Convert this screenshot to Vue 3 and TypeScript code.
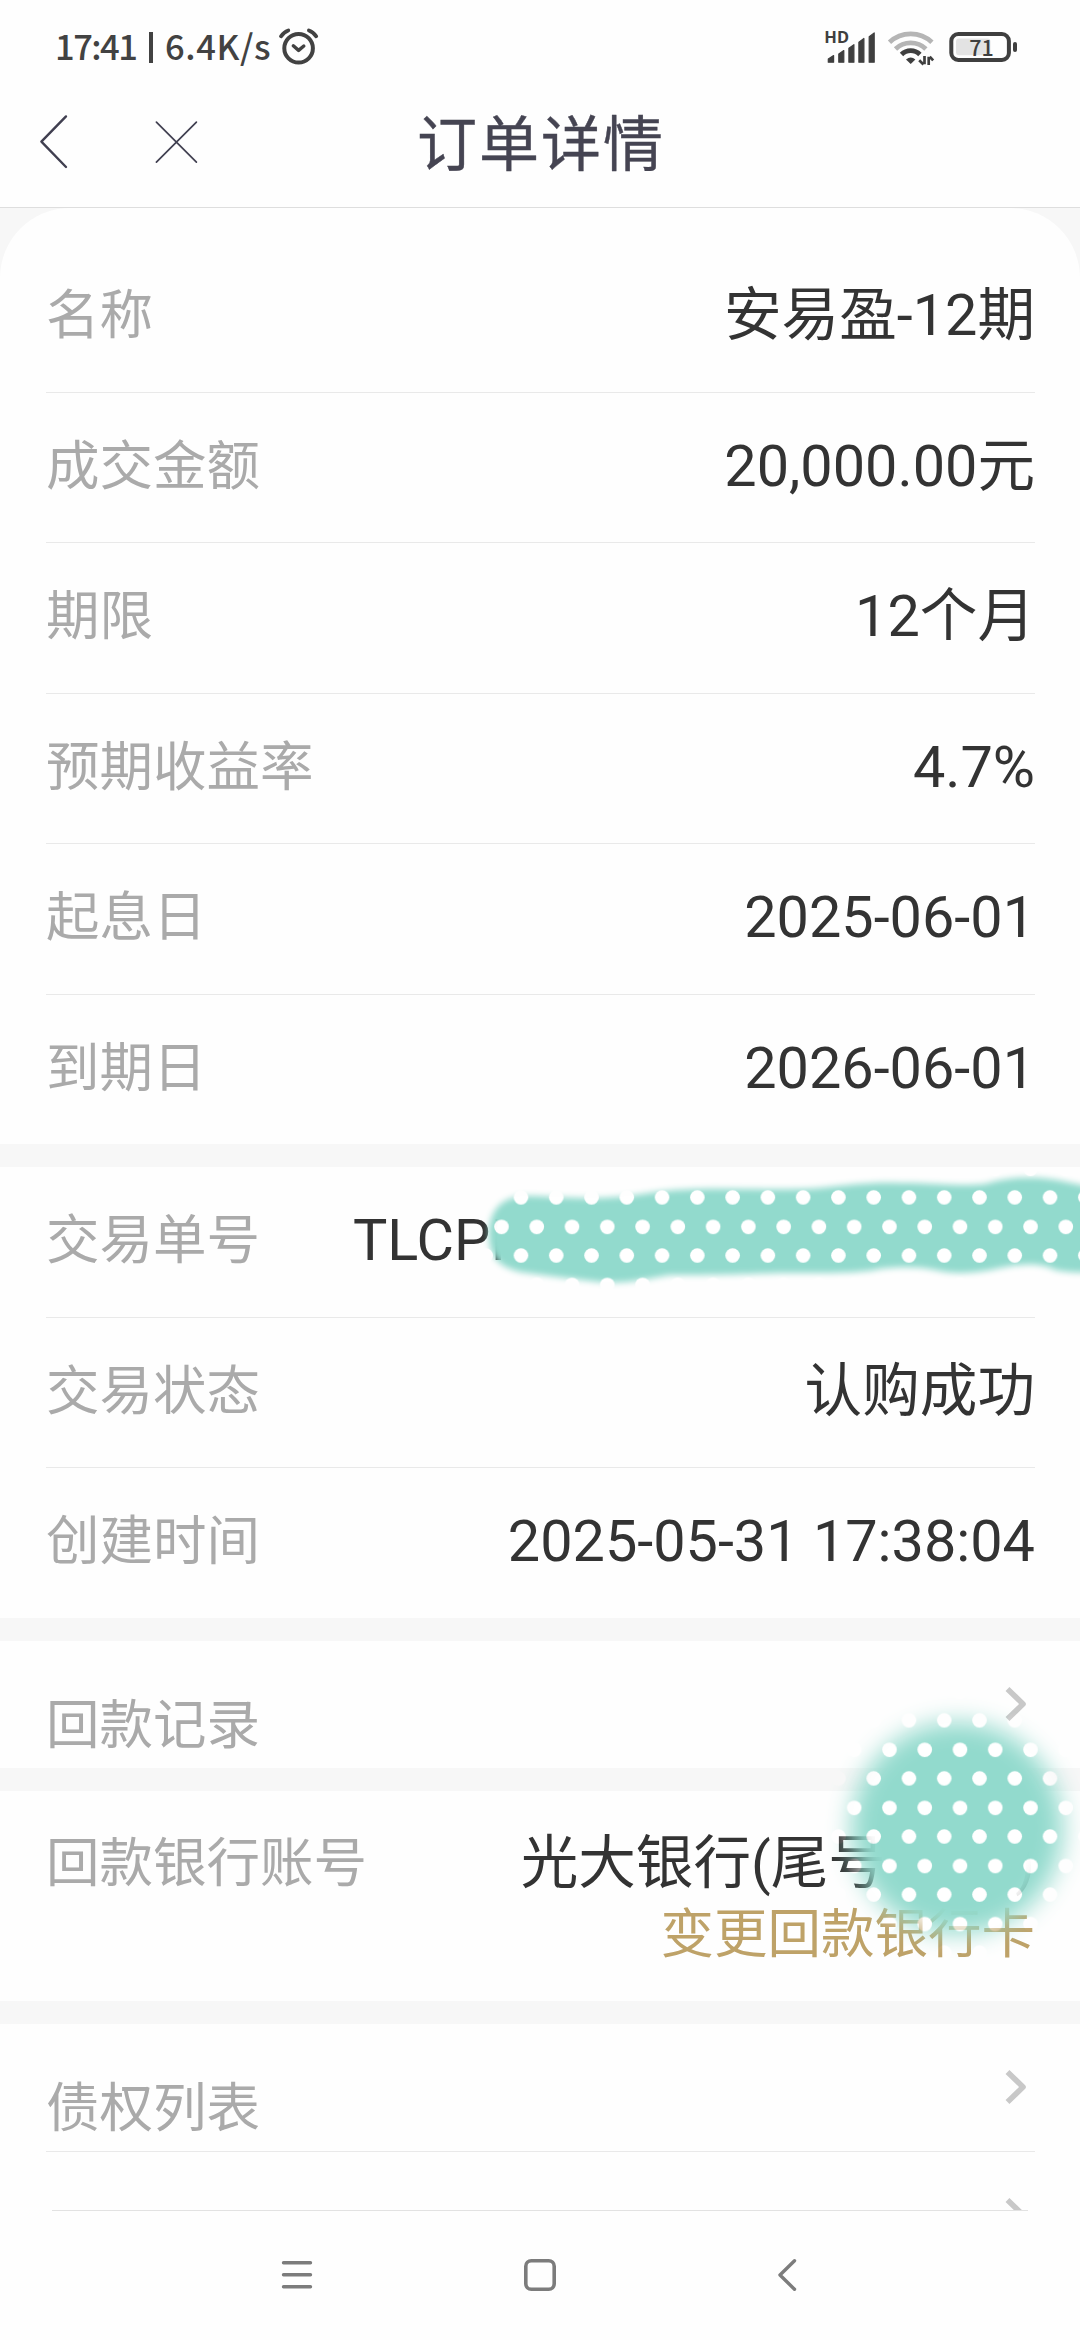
<script setup lang="ts">
interface Row {
  label: string
  value: string
}

const productRows: Row[] = [
  { label: '名称', value: '安易盈-12期' },
  { label: '成交金额', value: '20,000.00元' },
  { label: '期限', value: '12个月' },
  { label: '预期收益率', value: '4.7%' },
  { label: '起息日', value: '2025-06-01' },
  { label: '到期日', value: '2026-06-01' },
]

const tradeRows: Row[] = [
  { label: '交易单号', value: 'TLCPI' },
  { label: '交易状态', value: '认购成功' },
  { label: '创建时间', value: '2025-05-31 17:38:04' },
]
</script>

<template>
  <div class="screen">
    <div class="status">
      <div class="status-left">
        <span class="clock">17:41</span>
        <span class="bar"></span>
        <span class="rate">6.4K/s</span>
        <svg class="alarm" width="42" height="40" viewBox="278 27 42 40" fill="none" stroke="#424242" stroke-linecap="round">
          <circle cx="298.6" cy="48.3" r="14.3" stroke-width="4" />
          <path d="M293.3 45.8l5.3 4.6 5.2-4.4" stroke-width="3.4" stroke-linejoin="round" />
          <path d="M281 36.3q3-4.3 7.3-5.8M316.2 36.3q-3-4.3-7.3-5.8" stroke-width="3.8" />
        </svg>
      </div>
      <svg class="indicators" width="200" height="50" viewBox="820 22 200 50">
        <text x="824.3" y="42.7" class="hd">HD</text>
        <g fill="#3f3f3f" stroke="#3f3f3f" stroke-width="1.2" stroke-linejoin="round">
          <path d="M828.3 59l5.3-3.4v6.6h-5.3z" />
          <path d="M838.8 54l5-3.4v11.6h-5z" />
          <path d="M848.9 48.3l5-3.6v17.5h-5z" />
          <path d="M858.9 42.3l5-3.8v23.7h-5z" />
          <path d="M869.2 36.8l5-3.9v29.3h-5z" />
        </g>
        <g fill="none" stroke-width="4.8">
          <path d="M889.5 42.3a31 31 0 0 1 42.4 0" stroke="#b5b5b5" />
          <path d="M895.5 48.9a22 22 0 0 1 30.4 0" stroke="#b5b5b5" />
          <path d="M901.5 54.5a13 13 0 0 1 18.4 0" stroke="#3f3f3f" />
        </g>
        <path d="M906 59.6q4.7-4.2 9.4 0l-4.7 4.4z" fill="#3f3f3f" />
        <path d="M924.5 56v8.3M923.5 64.5l-4.3-4.3M928.7 65v-8.3M929.7 56.7l3.5 3.7" fill="none" stroke="#3f3f3f" stroke-width="2.7" />
        <rect x="951.3" y="34" width="57.6" height="26" rx="7" fill="none" stroke="#3f3f3f" stroke-width="4" />
        <rect x="956" y="38.4" width="34.5" height="16.8" rx="3" fill="#e3e3e3" />
        <text x="969.2" y="55.7" class="battery">71</text>
        <rect x="1013" y="42" width="4" height="10" rx="2" fill="#3f3f3f" />
      </svg>
    </div>

    <header class="header">
      <svg width="240" height="80" viewBox="0 102 240 80" fill="none" stroke="#403f50" stroke-linecap="round" stroke-linejoin="round">
        <path d="M66 116.4L41.4 141.7L66 167" stroke-width="2.4" />
        <path d="M156.4 122.2l40 40M196.4 122.2l-40 40" stroke-width="1.7" />
      </svg>
      <h1 class="title">订单详情</h1>
    </header>

    <main class="content">
      <section class="card product">
        <div v-for="row in productRows" :key="row.label" class="row">
          <span class="label">{{ row.label }}</span>
          <span class="value">{{ row.value }}</span>
        </div>
      </section>

      <section class="card trade">
        <div v-for="(row, i) in tradeRows" :key="row.label" class="row">
          <span class="label">{{ row.label }}</span>
          <span class="value" :class="{ serial: i === 0 }">{{ row.value }}</span>
        </div>
      </section>

      <section class="card">
        <div class="link-row">
          <span class="label">回款记录</span>
          <svg class="chevron" width="22" height="36" viewBox="0 0 22 36"><path d="M2.5 3L18 18 2.5 33" /></svg>
        </div>
      </section>

      <section class="card bank">
        <span class="label">回款银行账号</span>
        <div class="bank-info">
          <span class="value">光大银行(尾号<i class="tail"></i>)</span>
          <span class="change">变更回款银行卡</span>
        </div>
      </section>

      <section class="card last">
        <div class="link-row">
          <span class="label">债权列表</span>
          <svg class="chevron" width="22" height="36" viewBox="0 0 22 36"><path d="M2.5 3L18 18 2.5 33" /></svg>
        </div>
        <div class="link-row next">
          <span class="label"></span>
          <svg class="chevron" width="22" height="36" viewBox="0 0 22 36"><path d="M2.5 3L18 18 2.5 33" /></svg>
        </div>
      </section>
    </main>

    <nav class="nav">
      <svg width="32" height="36" viewBox="281 2257 32 36" stroke="#7c7c7c" stroke-width="3.4" stroke-linecap="round">
        <path d="M283.5 2262.7h27M283.5 2274.7h27M283.5 2286.7h27" />
      </svg>
      <svg width="32" height="36" viewBox="524 2257 32 36" fill="none" stroke="#7c7c7c" stroke-width="3.6">
        <rect x="525.8" y="2260.7" width="28.4" height="28.6" rx="5.5" />
      </svg>
      <svg width="32" height="36" viewBox="767 2257 32 36" fill="none" stroke="#7c7c7c" stroke-width="3.4" stroke-linecap="round" stroke-linejoin="round">
        <path d="M794.5 2260.7L780 2275l14.5 14.3" />
      </svg>
    </nav>

    <!-- polka-dot brush strokes that cover the private numbers -->
    <svg class="brush" width="1080" height="2340" viewBox="0 0 1080 2340">
      <defs>
        <pattern id="dots" patternUnits="userSpaceOnUse" x="494" y="1183" width="35.27" height="58.1">
          <rect width="36" height="59" fill="#92dacd" />
          <circle cx="27" cy="14.4" r="7.3" fill="#fff" />
          <circle cx="7.5" cy="43.9" r="7.3" fill="#fff" />
        </pattern>
        <filter id="soft" x="-10%" y="-30%" width="120%" height="160%"><feGaussianBlur stdDeviation="3.2" /></filter>
        <filter id="softer" x="-40%" y="-40%" width="180%" height="180%"><feGaussianBlur stdDeviation="12" /></filter>
        <mask id="stroke" maskUnits="userSpaceOnUse" x="460" y="1150" width="620" height="160">
          <path
            filter="url(#soft)"
            fill="#fff"
            d="M489 1235C489 1208 504 1197 524 1196C550 1196 570 1199 600 1198C640 1197 650 1190 700 1189C740 1188 780 1191 820 1188C850 1185 870 1182 900 1183C940 1183 960 1187 985 1184C1005 1178 1020 1177 1040 1178C1065 1180 1080 1186 1110 1191V1271C1080 1273 1070 1273 1055 1270C1040 1262 1020 1264 1000 1268C980 1273 955 1275 935 1270C915 1266 890 1267 875 1270C850 1274 810 1273 780 1273C740 1274 720 1275 670 1275C640 1280 625 1284 600 1282C570 1279 545 1275 520 1272C502 1267 489 1260 489 1235Z"
          />
        </mask>
        <mask id="spot" maskUnits="userSpaceOnUse" x="780" y="1650" width="300" height="360">
          <circle cx="957" cy="1828" r="106" fill="#fff" filter="url(#softer)" />
        </mask>
      </defs>
      <rect x="460" y="1150" width="620" height="160" fill="url(#dots)" mask="url(#stroke)" />
      <rect x="780" y="1650" width="300" height="360" fill="url(#dots)" mask="url(#spot)" />
    </svg>
  </div>
</template>

<style>
body {
  margin: 0;
  background: #fefefe;
}
</style>

<style scoped>
.screen {
  position: relative;
  display: flex;
  flex-direction: column;
  width: 1080px;
  height: 2340px;
  overflow: hidden;
  background: #fefefe;
  font-family: Roboto, "Noto Sans CJK SC", sans-serif;
}
.status {
  display: flex;
  justify-content: space-between;
  box-sizing: border-box;
  height: 80px;
  padding: 22px 60px 0 55px;
}
.status-left {
  display: flex;
}
.clock,
.rate {
  color: #424242;
  font: 500 34.5px/50px "Noto Sans CJK SC", sans-serif;
  margin-top: -2px;
  white-space: nowrap;
}
.clock {
  width: 94px;
  letter-spacing: -1.5px;
}
.bar {
  width: 4px;
  height: 31px;
  margin: 10px 12px 0 0;
  background: #424242;
}
.rate {
  width: 113px;
  letter-spacing: 0.6px;
}
.alarm {
  margin-top: 5px;
}
.hd {
  fill: #3f3f3f;
  font: 700 16.5px "Noto Sans", sans-serif;
}
.battery {
  fill: #3f3f3f;
  font: 500 21.5px "Noto Sans CJK SC", sans-serif;
}
.header {
  display: grid;
  grid-template-columns: 240px 1fr 240px;
  box-sizing: border-box;
  height: 128px;
  padding-top: 22px;
  border-bottom: 1px solid #dedede;
}
.title {
  margin: -3px 0 0 2px;
  color: #454452;
  font: 400 60px/82px "Noto Sans CJK SC", sans-serif;
  letter-spacing: 2px;
  text-align: center;
  -webkit-text-stroke: 0.4px #454452;
}
.content {
  display: flex;
  flex-direction: column;
  gap: 23px;
  height: 2002px;
  overflow: hidden;
  background: #f7f7f7;
}
.card {
  display: flex;
  flex-direction: column;
  flex-shrink: 0;
  box-sizing: border-box;
  padding: 0 45px 0 46px;
  background: #fefefe;
}
.product {
  height: 936px;
  padding-top: 34px;
  border-radius: 70px 70px 0 0;
}
.trade {
  height: 451px;
}
.row {
  display: flex;
  flex: 1;
  justify-content: space-between;
  align-items: flex-start;
  box-sizing: border-box;
  min-height: 0;
}
.row + .row {
  border-top: 1px solid #e9e9e9;
}
.label {
  margin-top: 31px;
  color: #aaa;
  font: 400 53.5px/76px "Noto Sans CJK SC", sans-serif;
  white-space: nowrap;
}
.value {
  margin-top: 36px;
  color: #333;
  font-size: 57.6px;
  line-height: 76px;
  white-space: nowrap;
}
.serial {
  width: 682px;
}
.link-row {
  display: flex;
  justify-content: space-between;
  box-sizing: border-box;
  height: 127px;
}
.link-row .label {
  margin-top: 42px;
}
.link-row.next {
  border-top: 1px solid #e9e9e9;
}
.chevron {
  margin: 45px 8px 0 0;
  fill: none;
  stroke: #c8c8c8;
  stroke-width: 5.6;
  stroke-linejoin: round;
}
.bank {
  flex-direction: row;
  justify-content: space-between;
  height: 210px;
}
.bank-info {
  display: flex;
  flex-direction: column;
  align-items: flex-end;
}
.bank .label {
  margin-top: 30px;
}
.bank .value {
  margin-top: 35px;
}
.tail {
  display: inline-block;
  width: 129px;
}
.change {
  margin-top: -10px;
  color: #bea268;
  font: 400 53.5px/76px "Noto Sans CJK SC", sans-serif;
}
.last {
  height: 260px;
}
.nav {
  display: flex;
  justify-content: space-between;
  position: relative;
  box-sizing: border-box;
  height: 130px;
  padding: 47px 281px 0;
  background: #fefefe;
}
.nav::before {
  content: "";
  position: absolute;
  top: 0;
  left: 52px;
  right: 52px;
  height: 1px;
  background: #e2e2e2;
}
.brush {
  position: absolute;
  top: 0;
  left: 0;
}
</style>
